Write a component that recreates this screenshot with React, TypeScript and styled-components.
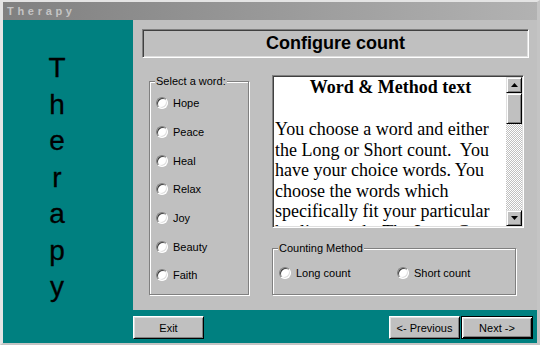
import React from 'react';
import styled, { createGlobalStyle, css } from 'styled-components';

const GlobalStyle = createGlobalStyle`
  html, body { margin: 0; padding: 0; background: #c0c0c0; }
  body { font-family: "Liberation Sans", Arial, sans-serif; }
`;

const Window = styled.div`
  width: 540px;
  height: 345px;
  box-sizing: border-box;
  background: #c0c0c0;
  border-style: solid;
  border-width: 2px 3px 2px 3px;
  border-color: #e4e4e4 #c4c4c4 #c4c4c4 #e4e4e4;
  display: flex;
  flex-direction: column;
`;

const TitleBar = styled.div`
  height: 18px;
  flex: none;
  background: linear-gradient(to right, #808080, #b2b2b2);
  color: #c4c4c4;
  font: bold 11px "Liberation Sans", Arial, sans-serif;
  letter-spacing: 3.7px;
  line-height: 18px;
  padding-left: 4px;
`;

const Main = styled.div`
  flex: 1;
  display: flex;
  background: #008080;
`;

const Sidebar = styled.div`
  width: 130px;
  flex: none;
  box-sizing: border-box;
  padding: 30px 22px 0 0;
  display: flex;
  flex-direction: column;
  align-items: center;
`;

const SideLetter = styled.div`
  font: 28px "Liberation Sans", Arial, sans-serif;
  line-height: 36.5px;
  color: #000;
  -webkit-text-stroke: 0.3px #000;
`;

const RightColumn = styled.div`
  flex: 1;
  display: flex;
  flex-direction: column;
`;

const Panel = styled.div`
  height: 290px;
  box-sizing: border-box;
  background: #c0c0c0;
  padding: 9px 8px 0 9px;
`;

const Header = styled.div`
  height: 29px;
  box-sizing: border-box;
  border-style: solid;
  border-width: 1px;
  border-color: #808080 #fff #fff #808080;
  box-shadow: inset 1px 1px #404040, inset -1px -1px #dfdfdf;
  display: flex;
  align-items: center;
  justify-content: center;
  font: bold 18px "Liberation Sans", Arial, sans-serif;
  color: #000;
`;

const ContentRow = styled.div`
  display: flex;
  align-items: flex-start;
  margin-top: 17px;
  padding-left: 7px;
  gap: 23px;
`;

const GroupBox = styled.div<{ $w: number; $h: number; $top?: number; $pad?: number }>`
  position: relative;
  width: ${p => p.$w}px;
  height: ${p => p.$h}px;
  margin-top: ${p => p.$top ?? 0}px;
  box-sizing: border-box;
  border: 1px solid #808080;
  box-shadow: inset 1px 1px #fff, 1px 1px #fff;
  padding: ${p => p.$pad ?? 7}px 0 0 6px;
`;

const Legend = styled.span`
  position: absolute;
  top: -7px;
  left: 5px;
  padding: 0 1px;
  background: #c0c0c0;
  font: 11px "Liberation Sans", Arial, sans-serif;
  line-height: 13px;
  color: #000;
`;

const RadioList = styled.div<{ $row?: boolean }>`
  display: flex;
  flex-direction: ${p => (p.$row ? 'row' : 'column')};
`;

const RadioItem = styled.label<{ $w?: number }>`
  display: flex;
  align-items: center;
  gap: 5px;
  height: 28.67px;
  width: ${p => (p.$w ? `${p.$w}px` : 'auto')};
  font: 11px "Liberation Sans", Arial, sans-serif;
  color: #000;
`;

const RadioCircle = styled.span`
  width: 12px;
  height: 12px;
  box-sizing: border-box;
  border-radius: 50%;
  background: #fff;
  border: 1px solid;
  border-color: #808080 #fff #fff #808080;
  box-shadow: inset 1px 1px #404040, inset -1px -1px #dfdfdf;
  flex: none;
`;

const RightStack = styled.div`
  display: flex;
  flex-direction: column;
  gap: 20px;
`;

const TextBox = styled.div`
  width: 252px;
  height: 153px;
  box-sizing: border-box;
  background: #fff;
  border-style: solid;
  border-width: 1px;
  border-color: #808080 #fff #fff #808080;
  box-shadow: inset 1px 1px #404040, inset -1px -1px #dfdfdf;
  padding: 1px;
  display: flex;
`;

const TextArea = styled.div`
  flex: 1;
  overflow: hidden;
  padding-left: 1px;
  font: 18px "Liberation Serif", "Times New Roman", serif;
  line-height: 20.6px;
  color: #000;
`;

const TextTitle = styled.div`
  font-weight: bold;
  text-align: center;
  line-height: 21px;
  margin-bottom: 21px;
`;

const ScrollBar = styled.div`
  width: 16px;
  flex: none;
  display: flex;
  flex-direction: column;
`;

const raised = css`
  box-sizing: border-box;
  background: #c0c0c0;
  border: 1px solid;
  border-color: #dfdfdf #000 #000 #dfdfdf;
  box-shadow: inset 1px 1px #fff, inset -1px -1px #808080;
`;

const ScrollButton = styled.div`
  ${raised};
  height: 16px;
  display: flex;
  align-items: center;
  justify-content: center;
`;

const Track = styled.div`
  flex: 1;
  background-color: #fff;
  background-image: repeating-conic-gradient(#c0c0c0 0 25%, #fff 0 50%);
  background-size: 2px 2px;
`;

const Thumb = styled.div`
  ${raised};
  height: 31px;
`;

const ButtonBar = styled.div`
  flex: 1;
  display: flex;
  align-items: flex-start;
  box-sizing: border-box;
  padding: 6px 4px 0 0;
`;

const Spacer = styled.div`
  flex: 1;
`;

const Button = styled.button<{ $w: number; $default?: boolean }>`
  width: ${p => p.$w}px;
  height: 23px;
  box-sizing: border-box;
  margin: 0;
  padding: 0;
  background: #c0c0c0;
  font: 11px "Liberation Sans", Arial, sans-serif;
  color: #000;
  border: 1px solid;
  border-color: #fff #000 #000 #fff;
  box-shadow: inset 1px 1px #dfdfdf, inset -1px -1px #808080;
  ${p =>
    p.$default &&
    css`
      margin-left: 1px;
      border-color: #000;
      box-shadow: inset 1px 1px #fff, inset -1px -1px #000, inset 2px 2px #dfdfdf, inset -2px -2px #808080;
    `}
`;

const Arrow = ({ up }: { up?: boolean }) => (
  <svg width="7" height="4" viewBox="0 0 7 4">
    {up ? <polygon points="3.5,0 7,4 0,4" fill="#000" /> : <polygon points="0,0 7,0 3.5,4" fill="#000" />}
  </svg>
);

const Radio = ({ label, w }: { label: string; w?: number }) => (
  <RadioItem $w={w}>
    <RadioCircle />
    {label}
  </RadioItem>
);

const words = ['Hope', 'Peace', 'Heal', 'Relax', 'Joy', 'Beauty', 'Faith'];

export default function App() {
  return (
    <>
      <GlobalStyle />
      <Window>
        <TitleBar>Therapy</TitleBar>
        <Main>
          <Sidebar>
            {'Therapy'.split('').map((c, i) => (
              <SideLetter key={i}>{c}</SideLetter>
            ))}
          </Sidebar>
          <RightColumn>
            <Panel>
              <Header>Configure count</Header>
              <ContentRow>
                <GroupBox $w={100} $h={214} $top={6}>
                  <Legend>Select a word:</Legend>
                  <RadioList>
                    {words.map(w => (
                      <Radio key={w} label={w} />
                    ))}
                  </RadioList>
                </GroupBox>
                <RightStack>
                  <TextBox>
                    <TextArea>
                      <TextTitle>Word &amp; Method text</TextTitle>
                      You choose a word and either the Long or Short count.{'\u00a0'} You have your choice words. You
                      choose the words which specifically fit your particular healing needs. The Long Count takes
                      longer and the Short Count is quicker.
                    </TextArea>
                    <ScrollBar>
                      <ScrollButton>
                        <Arrow up />
                      </ScrollButton>
                      <Thumb />
                      <Track />
                      <ScrollButton>
                        <Arrow />
                      </ScrollButton>
                    </ScrollBar>
                  </TextBox>
                  <GroupBox $w={244} $h={47} $pad={10}>
                    <Legend>Counting Method</Legend>
                    <RadioList $row>
                      <Radio label="Long count" w={118} />
                      <Radio label="Short count" />
                    </RadioList>
                  </GroupBox>
                </RightStack>
              </ContentRow>
            </Panel>
            <ButtonBar>
              <Button $w={71}>Exit</Button>
              <Spacer />
              <Button $w={71}>&lt;- Previous</Button>
              <Button $w={72} $default>
                Next -&gt;
              </Button>
            </ButtonBar>
          </RightColumn>
        </Main>
      </Window>
    </>
  );
}
